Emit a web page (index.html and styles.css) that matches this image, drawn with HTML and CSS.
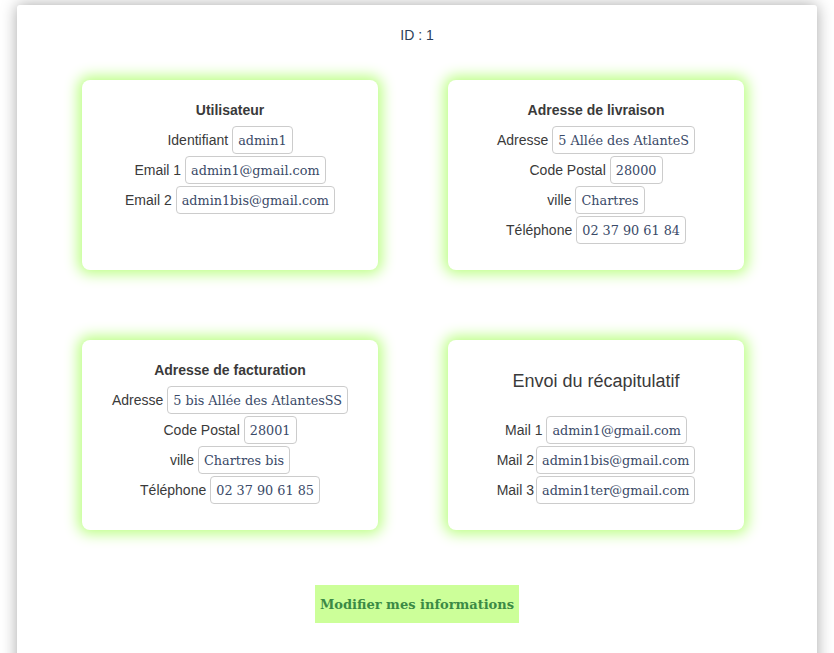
FILE: index.html
```html
<!DOCTYPE html>
<html lang="fr">
<head>
<meta charset="utf-8">
<title>Mes informations</title>
<link rel="stylesheet" href="styles.css">
</head>
<body>
<div class="page">
  <p class="id">ID : 1</p>
  <div class="cards">
    <section class="card">
      <h3 class="card-title">Utilisateur</h3>
      <div class="row"><span class="label">Identifiant</span><span class="field">admin1</span></div>
      <div class="row"><span class="label">Email 1</span><span class="field">admin1@gmail.com</span></div>
      <div class="row"><span class="label">Email 2</span><span class="field">admin1bis@gmail.com</span></div>
    </section>
    <section class="card">
      <h3 class="card-title">Adresse de livraison</h3>
      <div class="row"><span class="label">Adresse</span><span class="field">5 Allée des AtlanteS</span></div>
      <div class="row"><span class="label">Code Postal</span><span class="field">28000</span></div>
      <div class="row"><span class="label">ville</span><span class="field">Chartres</span></div>
      <div class="row"><span class="label">Téléphone</span><span class="field">02 37 90 61 84</span></div>
    </section>
    <section class="card">
      <h3 class="card-title">Adresse de facturation</h3>
      <div class="row"><span class="label">Adresse</span><span class="field">5 bis Allée des AtlantesSS</span></div>
      <div class="row"><span class="label">Code Postal</span><span class="field">28001</span></div>
      <div class="row"><span class="label">ville</span><span class="field">Chartres bis</span></div>
      <div class="row"><span class="label">Téléphone</span><span class="field">02 37 90 61 85</span></div>
    </section>
    <section class="card">
      <h2 class="card-title big">Envoi du récapitulatif</h2>
      <div class="row"><span class="label">Mail 1</span><span class="field">admin1@gmail.com</span></div>
      <div class="row"><span class="label tight">Mail 2</span><span class="field">admin1bis@gmail.com</span></div>
      <div class="row"><span class="label tight">Mail 3</span><span class="field">admin1ter@gmail.com</span></div>
    </section>
  </div>
  <div class="actions">
    <button class="btn" type="button">Modifier mes informations</button>
  </div>
</div>
</body>
</html>
```

FILE: styles.css
```css
html, body {
  margin: 0;
  padding: 0;
  background: #ffffff;
}

body {
  font-family: "Liberation Sans", Arial, sans-serif;
  font-size: 14px;
  color: #333333;
}

.page {
  width: 800px;
  margin: 5px auto 0;
  background: #ffffff;
  border-radius: 3px;
  box-shadow: 0 0 16px rgba(0, 0, 0, 0.35);
  padding: 22px 0 40px;
  min-height: 640px;
}

.id {
  margin: 0;
  text-align: center;
  line-height: 16px;
  color: #2c3e5a;
}

.cards {
  margin-top: 37px;
  padding-left: 65px;
  display: grid;
  grid-template-columns: 296px 296px;
  column-gap: 70px;
  row-gap: 70px;
}

.card {
  height: 190px;
  box-sizing: border-box;
  padding-top: 18px;
  background: #ffffff;
  border-radius: 8px;
  box-shadow: 0 0 14px 4px #bcff84;
  display: flex;
  flex-direction: column;
  align-items: center;
}

.card-title {
  margin: 0 0 3px;
  font-size: 14px;
  font-weight: bold;
  line-height: 24px;
  color: #3a3a3a;
}

.card-title.big {
  font-size: 18px;
  font-weight: normal;
  line-height: 30px;
  margin: 8px 0 19px;
}

.row {
  height: 30px;
  display: flex;
  align-items: center;
  justify-content: center;
}

.label {
  margin-right: 4px;
  line-height: 20px;
  color: #3a3a3a;
}

.label.tight {
  margin-right: 2px;
}

.field {
  box-sizing: border-box;
  height: 28px;
  line-height: 27px;
  padding: 0 5px;
  border: 1px solid #cccccc;
  border-radius: 4px;
  font-family: "DejaVu Serif", serif;
  font-size: 12.8px;
  color: #3a4a68;
  white-space: nowrap;
}

.actions {
  display: flex;
  justify-content: center;
  margin-top: 55px;
}

.btn {
  width: 204px;
  height: 38px;
  border: none;
  border-radius: 0;
  background: #ccff99;
  color: #3b8a45;
  font-family: "DejaVu Serif", serif;
  font-weight: bold;
  font-size: 13px;
  padding: 0;
  cursor: pointer;
}
```
